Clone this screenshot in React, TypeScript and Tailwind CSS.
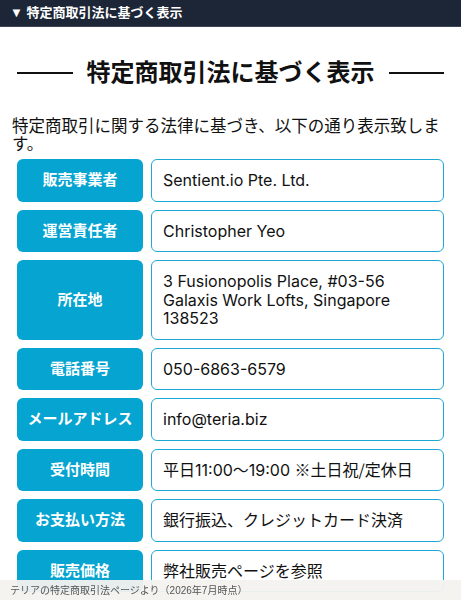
import type { ReactNode } from "react";

const cjk = { fontFamily: '"Noto Sans CJK JP", sans-serif' };

const rows: { label: string; value: ReactNode[] }[] = [
  { label: "販売事業者", value: ["Sentient.io Pte. Ltd."] },
  { label: "運営責任者", value: ["Christopher Yeo"] },
  {
    label: "所在地",
    value: ["3 Fusionopolis Place, #03-56", "Galaxis Work Lofts, Singapore", "138523"],
  },
  { label: "電話番号", value: ["050-6863-6579"] },
  { label: "メールアドレス", value: ["info@teria.biz"] },
  {
    label: "受付時間",
    value: [
      <>
        平日11:00〜19:00{" "}
        <span className="leading-none" style={cjk}>
          ※土日祝/定休日
        </span>
      </>,
    ],
  },
  { label: "お支払い方法", value: ["銀行振込、クレジットカード決済"] },
  { label: "販売価格", value: ["弊社販売ページを参照"] },
];

export default function App() {
  return (
    <div
      className="min-h-screen bg-white text-[#111]"
      style={{ fontFamily: '"Liberation Sans", "Noto Sans CJK JP", sans-serif' }}
    >
      <div className="h-[27px] bg-[#1c2637] border-b border-[#3a4556] flex items-center px-[10px] text-white text-[13px] font-bold">
        ▼ 特定商取引法に基づく表示
      </div>

      <div className="mt-[30px] px-[17px] flex items-center gap-[14px]">
        <div className="flex-1 h-[1.5px] bg-[#111]" />
        <h1 className="text-[24px] font-bold leading-[32px]">特定商取引法に基づく表示</h1>
        <div className="flex-1 h-[1.5px] bg-[#111]" />
      </div>

      <p className="mt-[28px] px-[12px] text-[16.5px] leading-[18px]">
        特定商取引に関する法律に基づき、以下の通り表示致します。
      </p>

      <div className="mt-[6px] px-[17px] flex flex-col gap-[8px] pb-10">
        {rows.map((r) => (
          <div key={r.label} className="flex gap-[8px]">
            <div className="w-[126px] shrink-0 rounded-[6px] bg-[#06a4d0] flex items-center justify-center text-white font-bold text-[15px]">
              {r.label}
            </div>
            <div
              className="flex-1 rounded-[6px] border-[1.5px] border-[#1ea8d3] px-[11px] py-[11px] text-[16px] leading-[18.5px]"
              style={{ fontFamily: 'Inter, "Noto Sans CJK JP", sans-serif' }}
            >
              {r.value.map((v, i) => (
                <div key={i}>{v}</div>
              ))}
            </div>
          </div>
        ))}
      </div>

      <div className="fixed bottom-0 left-0 right-0 h-[20px] bg-[#f4f2ee]/95 flex items-center px-[10px] text-[10px] text-[#555]">
        テリアの特定商取引法ページより（2026年7月時点）
      </div>
    </div>
  );
}
